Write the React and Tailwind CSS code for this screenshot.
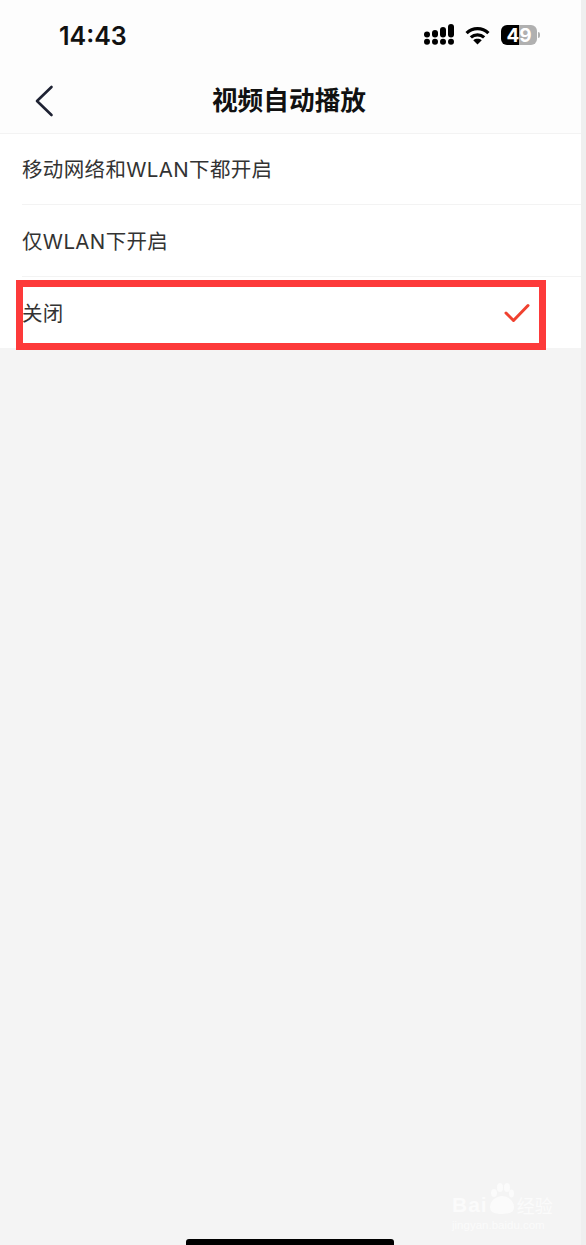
const font = { cjk: 'font-["Inter","Noto_Sans_CJK_SC",sans-serif]' }

function SignalIcon() {
  return (
    <svg className="-mt-[1px]" width="30" height="21" viewBox="0 0 30 21" fill="#000">
      <circle cx="3" cy="17.8" r="3" />
      <circle cx="11" cy="17.8" r="3" />
      <circle cx="19" cy="17.8" r="3" />
      <circle cx="27" cy="17.8" r="3" />
      <circle cx="3" cy="10.5" r="3" />
      <rect x="8" y="6" width="6" height="7.5" rx="3" />
      <rect x="16" y="3" width="6" height="10.5" rx="3" />
      <rect x="24" y="0" width="6" height="13.5" rx="3" />
    </svg>
  )
}

function WifiIcon() {
  return (
    <svg width="25" height="19" viewBox="0 0 26 20" fill="none" stroke="#000" strokeWidth="3.4">
      <path d="M1.5 7.5C8 1.2 18 1.2 24.5 7.5" />
      <path d="M6 12C10 8.3 16 8.3 20 12" />
      <path d="M8.5 15L13 19.5L17.5 15C14.8 13 11.2 13 8.5 15Z" fill="#000" stroke="none" />
    </svg>
  )
}

function Battery() {
  return (
    <div className="flex items-center gap-[1px]">
      <div className="relative w-[36px] h-[20px] flex">
        <div className="w-[18px] h-full bg-black rounded-l-[6px]" />
        <div className="w-[18px] h-full bg-[#b0b0b0] rounded-r-[6px]" />
        <span className="absolute inset-0 flex items-center justify-center text-[19px] font-bold text-white leading-none font-['Inter',sans-serif]">
          49
        </span>
      </div>
      <div className="w-[2px] h-[6px] rounded-r-full bg-[#b0b0b0]" />
    </div>
  )
}

function Row({ label, checked, className }) {
  return (
    <div className={`ml-[22px] flex items-center justify-between ${className}`}>
      <span className="pt-[3px] text-[20.5px] tracking-[0.35px] text-[#333333]">{label}</span>
      {checked && (
        <svg className="mr-[51px]" width="26" height="20" viewBox="0 0 26 20" fill="none" stroke="#f0412f" strokeWidth="3" strokeLinecap="round" strokeLinejoin="round">
          <path d="M2 10L9.5 17.5L24 2.5" />
        </svg>
      )}
    </div>
  )
}

export default function App() {
  return (
    <div className={`relative w-[586px] h-[1245px] overflow-hidden flex bg-[#efefef] ${font.cjk}`}>
      <div className="w-[581px] bg-[#f4f4f4]">
        <div className="bg-[#fdfdfd]">
          <div className="h-[70px] flex items-center justify-between pl-[59px] pr-[41px]">
            <span className="mt-[2px] text-[25px] font-semibold text-[#111111] leading-none">14:43</span>
            <div className="flex items-center gap-[11px]">
              <SignalIcon />
              <WifiIcon />
              <Battery />
            </div>
          </div>
          <div className="relative h-[63px] flex items-center justify-center pr-[3px]">
            <svg className="absolute left-[34px] top-[15px]" width="20" height="32" viewBox="0 0 20 32" fill="none" stroke="#1e2233" strokeWidth="2.6" strokeLinecap="round" strokeLinejoin="round">
              <path d="M17.5 2L3 16L17.5 30" />
            </svg>
            <span className="text-[25.7px] font-bold text-[#111111]">视频自动播放</span>
          </div>
        </div>
        <div className="bg-white border-t border-[#f3f3f3]">
          <Row label="移动网络和WLAN下都开启" className="h-[71px] border-b border-[#f3f3f3]" />
          <Row label="仅WLAN下开启" className="h-[72px] border-b border-[#f3f3f3]" />
          <Row label="关闭" checked className="h-[71px]" />
        </div>
      </div>

      {/* red highlight drawn over the screenshot */}
      <div className="absolute left-[16px] top-[280px] w-[530px] h-[70px] border-[7px] border-[#fd3a3a]" />

      {/* watermark */}
      <div className="absolute left-[452px] top-[1183px] text-[#fbfbfb] font-['Liberation_Sans',sans-serif]">
        <div className="flex items-end h-[31px]">
          <span className="text-[21px] leading-[18px] font-bold tracking-[1px]">Bai</span>
          <svg className="ml-[2px]" width="24" height="31" viewBox="0 0 24 31" fill="#fbfbfb">
            <path d="M12 13C18 13 24 18 24 24C24 29 20 31 12 31C4 31 0 29 0 24C0 18 6 13 12 13Z" />
            <ellipse cx="4" cy="10" rx="3" ry="4" />
            <ellipse cx="10" cy="4.5" rx="3" ry="4.5" />
            <ellipse cx="17" cy="4.5" rx="3" ry="4.5" />
            <ellipse cx="21.5" cy="10.5" rx="2.5" ry="4" />
          </svg>
          <span className="text-[18px] leading-[18px] ml-[3px] font-['Noto_Sans_CJK_SC',sans-serif]">经验</span>
        </div>
        <div className="text-[11.5px] leading-none mt-[6px]">jingyan.baidu.com</div>
      </div>

      {/* home indicator */}
      <div className="absolute left-[186px] bottom-0 w-[208px] h-[6px] bg-black rounded-t-[3px]" />
    </div>
  )
}
